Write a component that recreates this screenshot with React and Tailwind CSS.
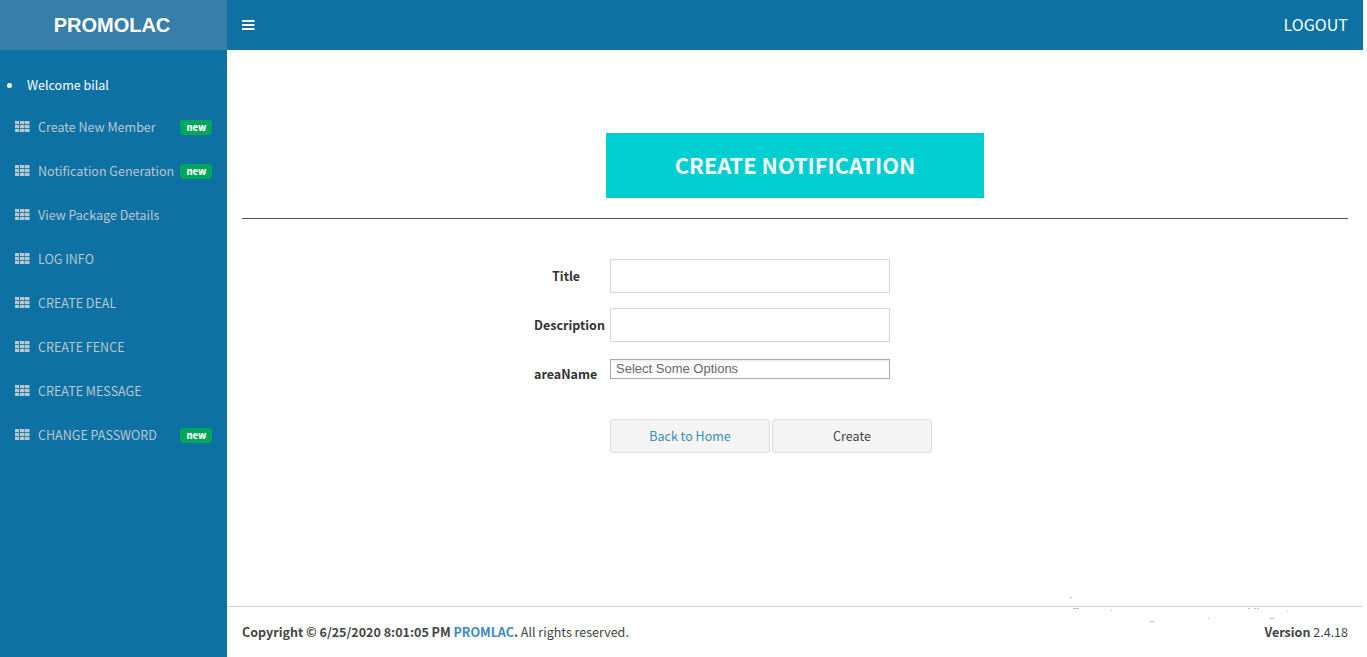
const menu = [
  { label: "Create New Member", isNew: true },
  { label: "Notification Generation", isNew: true },
  { label: "View Package Details" },
  { label: "LOG INFO" },
  { label: "CREATE DEAL" },
  { label: "CREATE FENCE" },
  { label: "CREATE MESSAGE" },
  { label: "CHANGE PASSWORD", isNew: true },
];

function GridIcon() {
  return (
    <svg width="15" height="11" viewBox="0 0 15 11" fill="#b8c7ce" className="mb-px mr-2 shrink-0">
      {[0, 4, 8].map((y) =>
        [0, 5, 10].map((x) => <rect key={`${x}-${y}`} x={x} y={y} width={x === 0 ? 4.2 : 4.5} height="3.2" />)
      )}
    </svg>
  );
}

function BarsIcon() {
  return (
    <svg width="13" height="10" viewBox="0 0 13 10" fill="#fff">
      {[0, 4, 8].map((y) => <rect key={y} y={y} width="12.5" height="2" rx="0.3" />)}
    </svg>
  );
}

function Sidebar() {
  return (
    <aside className="flex w-[227px] shrink-0 flex-col bg-[#0e71a3]">
      <div className="flex h-[50px] items-center justify-center bg-[#367fa9] pr-[3px] font-['Liberation_Sans',sans-serif] text-[20px] font-bold text-white">
        PROMOLAC
      </div>
      <div className="mt-[25px] flex h-5 items-center pl-[7px] text-white">
        <span className="mr-[15px] h-[5px] w-[5px] rounded-full bg-white" />
        Welcome bilal
      </div>
      <nav className="mt-[10px] flex flex-col">
        {menu.map((m) => (
          <a key={m.label} className="flex h-[44px] items-center px-[15px] text-[#b8c7ce]">
            <GridIcon />
            <span className="whitespace-nowrap">{m.label}</span>
            {m.isNew && (
              <span className="ml-auto flex h-[15px] w-[32px] items-center justify-center rounded-[3px] bg-[#00a65a] pb-px pl-px text-[9.4px] font-black leading-[14px] text-white">
                new
              </span>
            )}
          </a>
        ))}
      </nav>
    </aside>
  );
}

const specks = [
  [1070, 597, 2], [1073, 608, 6], [1111, 610, 1], [1150, 621, 4], [1208, 618, 1],
  [1248, 608, 2], [1254, 608, 2], [1257, 608, 2], [1287, 611, 1], [1270, 618, 4],
];

export default function App() {
  return (
    <div className="relative flex h-[657px] w-[1363px] overflow-hidden bg-white font-['Noto_Sans_CJK_SC','Noto_Sans',sans-serif] text-[12.53px] leading-[20px] text-[#333]">
      <Sidebar />
      <div className="flex flex-1 flex-col">
        <header className="flex h-[50px] items-center justify-between bg-[#0e71a3] px-[15px] text-white">
          <BarsIcon />
          <span className="pb-[2px] text-[16.1px]">LOGOUT</span>
        </header>
        <main className="flex h-[556px] flex-col px-[15px]">
          <h1 className="ml-[364px] mt-[83px] flex h-[65px] w-[378px] items-center justify-center bg-[#00ced1] pb-[2px] text-[21.8px] font-bold text-[#f0f8ff]">
            CREATE NOTIFICATION
          </h1>
          <hr className="mt-[20px] border-t border-[#555]" />
          <form className="ml-[292px] mt-[40px] flex flex-col">
            <div className="flex h-[34px] items-center">
              <label className="w-[76px] pl-[18px] font-bold">Title</label>
              <input className="h-[34px] w-[280px] border border-[#d2d6de]" />
            </div>
            <div className="mt-[15px] flex h-[34px] items-center">
              <label className="w-[76px] font-bold">Description</label>
              <input className="h-[34px] w-[280px] border border-[#d2d6de]" />
            </div>
            <div className="mt-[15px] flex h-[34px] items-start">
              <label className="mt-[7px] w-[76px] font-bold">areaName</label>
              <div className="mt-[2px] h-[20px] w-[280px] border border-[#aaa] bg-linear-to-b from-[#eee] to-white to-20% pl-[5px] font-['Liberation_Sans',sans-serif] text-[13px] leading-[18px] text-[#666]">
                Select Some Options
              </div>
            </div>
            <div className="ml-[76px] mt-[28px] flex gap-[2px]">
              <button type="button" className="h-[34px] w-[160px] rounded-[3px] border border-[#ddd] bg-[#f4f4f4] text-[#3c8dbc]">Back to Home</button>
              <button type="button" className="h-[34px] w-[160px] rounded-[3px] border border-[#ddd] bg-[#f4f4f4] text-[#444]">Create</button>
            </div>
          </form>
        </main>
        <footer className="flex h-[51px] items-center justify-between border-t border-[#d2d6de] px-[15px] text-[#444]">
          <p>
            <b>Copyright © 6/25/2020 8:01:05 PM <span className="text-[#3c8dbc]">PROMLAC</span>.</b> All rights reserved.
          </p>
          <p><b>Version</b> 2.4.18</p>
        </footer>
      </div>
      <svg className="pointer-events-none absolute left-0 top-0" width="1363" height="657" fill="#c0c0c0" shapeRendering="crispEdges">
        {specks.map(([x, y, w]) => <rect key={`${x}-${y}`} x={x} y={y} width={w} height="1" />)}
      </svg>
    </div>
  );
}
